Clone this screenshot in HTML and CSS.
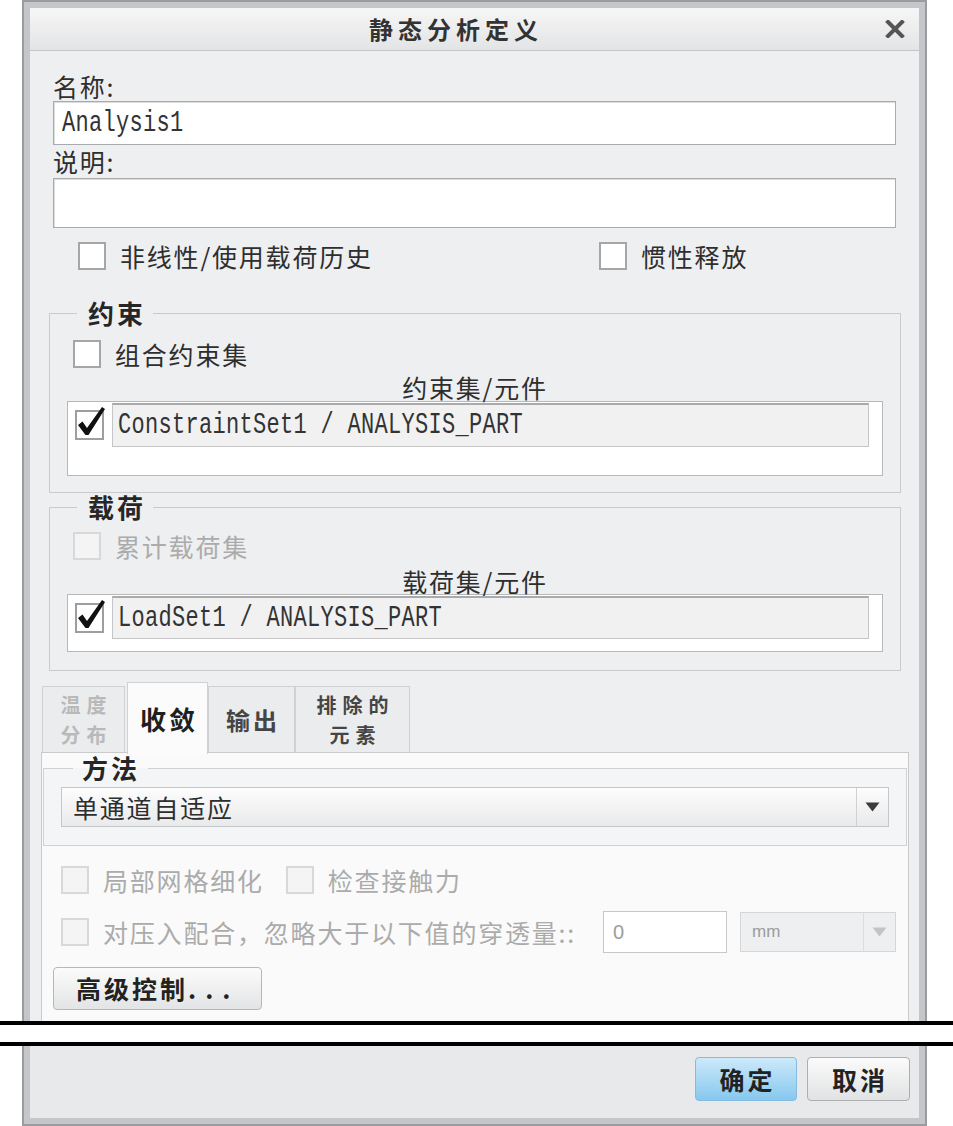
FILE: index.html
```html
<!DOCTYPE html>
<html lang="zh-CN">
<head>
<meta charset="utf-8">
<title>静态分析定义</title>
<link rel="stylesheet" href="styles.css">
</head>
<body>
<div class="dlg dlg-top">
  <div class="frame frame-top">
    <div class="titlebar">
      <div class="title">静态分析定义</div>
      <div class="close">
        <svg width="20" height="18" viewBox="0 0 20 18"><path d="M3 2 L17 16 M17 2 L3 16" stroke="#555" stroke-width="4" stroke-linecap="square" fill="none"/></svg>
      </div>
    </div>
    <div class="content">
      <div class="label">名称:</div>
      <div class="textfield tf-name"><span class="mono">Analysis1</span></div>
      <div class="label lbl-desc">说明:</div>
      <div class="textfield tf-desc"></div>

      <div class="opts">
        <div class="check"><span class="box"></span><span>非线性/使用载荷历史</span></div>
        <div class="check"><span class="box"></span><span>惯性释放</span></div>
      </div>

      <fieldset class="group g-cons">
        <legend>约束</legend>
        <div class="check row-combine"><span class="box"></span><span>组合约束集</span></div>
        <div class="caption">约束集/元件</div>
        <div class="listbox lb-cons">
          <div class="item">
            <span class="box checked"><svg class="tick" width="25" height="26" viewBox="0 0 25 26"><path d="M1 13 L5.5 9.5 L10 16 L25 -5 L28 -3 L11.5 23 L8.5 23 Z" fill="#111"/></svg></span>
            <div class="itemfield"><span class="mono">ConstraintSet1 / ANALYSIS_PART</span></div>
          </div>
        </div>
      </fieldset>

      <fieldset class="group g-load">
        <legend>载荷</legend>
        <div class="check dis row-cum"><span class="box"></span><span>累计载荷集</span></div>
        <div class="caption cap-load">载荷集/元件</div>
        <div class="listbox lb-load">
          <div class="item">
            <span class="box checked"><svg class="tick" width="25" height="26" viewBox="0 0 25 26"><path d="M1 13 L5.5 9.5 L10 16 L25 -5 L28 -3 L11.5 23 L8.5 23 Z" fill="#111"/></svg></span>
            <div class="itemfield"><span class="mono">LoadSet1 / ANALYSIS_PART</span></div>
          </div>
        </div>
      </fieldset>

      <div class="tabs">
        <div class="tab t1 disabled"><div class="tl">温度</div><div class="tl">分布</div></div>
        <div class="tab t2 active">收敛</div>
        <div class="tab t3">输出</div>
        <div class="tab t4"><div class="tl">排除的</div><div class="tl">元素</div></div>
      </div>
      <div class="panel">
        <fieldset class="group g-method">
          <legend>方法</legend>
          <div class="select sel-method">
            <span class="sel-text">单通道自适应</span>
            <span class="sel-arrow"><svg width="15" height="10" viewBox="0 0 15 10"><path d="M0.5 0.5 H14.5 L7.5 9.5 Z" fill="#3c3c3c"/></svg></span>
          </div>
        </fieldset>
        <div class="prow prow1">
          <div class="check dis"><span class="box"></span><span>局部网格细化</span></div>
          <div class="check dis c2"><span class="box"></span><span>检查接触力</span></div>
        </div>
        <div class="prow prow2">
          <div class="check dis c-press"><span class="box"></span><span>对压入配合，忽略大于以下值的穿透量::</span></div>
          <div class="numfield">0</div>
          <div class="select sel-unit">
            <span class="sel-text">mm</span>
            <span class="sel-arrow"><svg width="15" height="10" viewBox="0 0 15 10"><path d="M0.5 0.5 H14.5 L7.5 9.5 Z" fill="#c4c4c4"/></svg></span>
          </div>
        </div>
        <div class="btn adv">高级控制<span class="dots">...</span></div>
      </div>
    </div>
  </div>
</div>
<div class="break"></div>
<div class="dlg dlg-bottom">
  <div class="frame frame-bottom">
    <div class="footer">
      <div class="btn fbtn ok">确定</div>
      <div class="btn fbtn cancel">取消</div>
    </div>
  </div>
</div>
</body>
</html>
```

FILE: styles.css
```css
* { box-sizing: border-box; }
html, body { margin: 0; padding: 0; background: #fff; }
body {
  width: 953px;
  height: 1126px;
  overflow: hidden;
  font-family: "Noto Sans CJK SC", "Noto Sans", sans-serif;
  font-size: 25px;
  letter-spacing: 1.8px;
  color: #2e2e2e;
}

/* dialog frame */
.dlg { margin-left: 22px; width: 905px; border: 2px solid #9a9c9f; }
.dlg-top { border-bottom: 0; height: 1021px; overflow: hidden; }
.dlg-bottom { border-top: 0; height: 80px; }
.frame { border: 6px solid #c4c6c9; height: 100%; }
.frame-top { border-bottom: 0; display: flex; flex-direction: column; }
.frame-bottom { border-top: 0; }

.break {
  height: 25px;
  border-top: 4px solid #000;
  border-bottom: 4px solid #000;
  background: #fff;
}

/* title bar */
.titlebar {
  height: 43px;
  flex: none;
  display: flex;
  align-items: center;
  background: linear-gradient(#f6f6f7, #e3e4e5);
  border-bottom: 1px solid #c4c5c7;
}
.title {
  flex: 1;
  text-align: center;
  font-weight: 700;
  font-size: 24px;
  letter-spacing: 5px;
  padding-left: 5px;
  line-height: 30px;
  color: #333;
}
.close { width: 42px; display: flex; align-items: center; padding-left: 8px; }

/* content */
.content {
  flex: 1;
  background: #eeeff1;
  padding: 20px 23px 0;
  overflow: hidden;
}
.label { height: 30px; line-height: 30px; }
.lbl-desc { height: 33px; line-height: 33px; }
.textfield {
  background: #fff;
  border: 1px solid #a9abad;
  box-shadow: inset 1px 1px 0 #dcdcdc;
}
.tf-name { height: 44px; padding-left: 8px; display: flex; align-items: center; }
.tf-desc { height: 50px; }

.mono {
  display: inline-block;
  font-family: "Liberation Mono", monospace;
  font-size: 22px;
  letter-spacing: 0.3px;
  color: #333;
  transform: scaleY(1.3);
}

/* checkboxes */
.check { display: flex; align-items: center; white-space: nowrap; }
.box {
  flex: none;
  width: 28px;
  height: 28px;
  border: 2px solid #a4a6a8;
  background: #fff;
  margin-right: 14px;
}
.check.dis { color: #ababab; }
.check.dis .box { border-color: #d7d8da; background: #f4f4f5; }

.opts { margin-top: 14px; height: 28px; display: flex; align-items: center; padding-left: 25px; }
.opts .check:first-child { width: 521px; }

/* group boxes */
.group {
  margin: 29px -5px 0 -4px;
  border: 1px solid #c8cacc;
  padding: 0 17px 16px;
  min-width: 0;
}
.group legend {
  font-weight: 700;
  font-size: 26px;
  letter-spacing: 3px;
  line-height: 28px;
  padding: 0 7px 0 11px;
  margin-left: 10px;
  color: #262626;
}
.g-load { margin-top: 0; padding-bottom: 18px; }

.row-combine, .row-cum { margin-left: 6px; height: 28px; }
.row-combine { margin-top: 13px; }
.row-cum { margin-top: 11px; }

.caption { text-align: center; line-height: 28px; height: 28px; margin-top: 5px; }
.cap-load { margin-top: 8px; line-height: 26px; height: 26px; }

.listbox { background: #fff; border: 1px solid #b6b8ba; }
.lb-cons { height: 75px; }
.lb-load { height: 58px; }
.item { display: flex; align-items: center; padding: 1px 13px 0 7px; }
.item .box {
  width: 29px;
  height: 30px;
  margin-right: 8px;
  border-color: #9c9ea0;
}
.tick { display: block; overflow: visible; }
.itemfield {
  flex: 1;
  height: 44px;
  background: #f1f1f2;
  border: 1px solid #c3c5c7;
  border-top: 2px solid #a8aaac;
  display: flex;
  align-items: center;
  padding-left: 5px;
}
.lb-load .itemfield { height: 43px; }

/* tabs */
.tabs {
  display: flex;
  align-items: flex-end;
  height: 70px;
  margin: 11px 0 0 -11px;
}
.tab {
  height: 66px;
  border: 1px solid #cfd1d3;
  border-bottom: 0;
  background: #ebecee;
  display: flex;
  flex-direction: column;
  align-items: center;
  justify-content: center;
  text-align: center;
  font-weight: 700;
  font-size: 24px;
  letter-spacing: 3px;
  line-height: 30px;
  padding-left: 3px;
  color: #454545;
}
.tab .tl { height: 29.5px; line-height: 29.5px; font-size: 20px; letter-spacing: 6px; padding-left: 3px; }
.t1 { width: 83px; margin-right: 2px; }
.t2 { width: 81px; }
.t3 { width: 87px; }
.t4 { width: 115px; }
.tab.disabled { color: #b9b9b9; }
.tab.active {
  height: 72px;
  margin-bottom: -2px;
  background: #fbfbfb;
  position: relative;
  z-index: 1;
  font-size: 26px;
  letter-spacing: 3px;
  color: #1f1f1f;
}

/* tab panel */
.panel {
  margin: 0 -13px 0 -12px;
  border: 1px solid #c8cacc;
  background: #fafafa;
  height: 320px;
}
.g-method {
  margin: 1px 1px 0;
  padding: 0 17px 18px;
  background: #f4f5f6;
  border-color: #cfd1d3;
}
.g-method legend { margin-left: 12px; padding: 0 8px 0 9px; }

.select {
  display: flex;
  height: 40px;
  border: 1px solid #c5c7c9;
  background: linear-gradient(#fdfdfd, #e9eaeb);
}
.sel-method { margin-top: 5px; }
.sel-text { flex: 1; padding-left: 11px; line-height: 38px; }
.sel-arrow {
  width: 32px;
  border-left: 1px solid #cfd1d3;
  display: flex;
  align-items: center;
  justify-content: center;
}

.prow { display: flex; align-items: center; padding-left: 19px; }
.prow1 { margin-top: 20px; height: 28px; }
.prow1 .c2 { margin-left: 22px; }
.prow2 { margin-top: 17px; height: 42px; }
.c-press { width: 529px; }
.numfield {
  width: 124px;
  height: 42px;
  margin-left: 13px;
  background: #fff;
  border: 1px solid #c6c8ca;
  font-family: "Liberation Sans", sans-serif;
  font-size: 20px;
  letter-spacing: 0;
  color: #9c9c9c;
  padding-left: 9px;
  display: flex;
  align-items: center;
}
.sel-unit {
  width: 156px;
  margin-left: 13px;
  background: #eeeff0;
  border-color: #d4d6d8;
  font-family: "Liberation Sans", sans-serif;
  font-size: 17px;
  letter-spacing: 0;
  color: #9c9c9c;
}
.sel-unit .sel-arrow { border-left-color: #dcdddf; }

.btn {
  border-radius: 4px;
  font-weight: 700;
  font-size: 25px;
  letter-spacing: 3px;
  color: #222;
}
.adv {
  margin: 14px 0 0 11px;
  width: 209px;
  height: 43px;
  line-height: 41px;
  border: 1px solid #b5b7b9;
  background: linear-gradient(#fbfbfb, #e3e4e5);
  padding-left: 22px;
}
.dots { letter-spacing: 9px; }

/* footer */
.footer {
  height: 100%;
  background: #e8e9eb;
  display: flex;
  justify-content: flex-end;
  align-items: flex-start;
  gap: 10px;
  padding: 11px 9px 0 0;
}
.fbtn {
  height: 44px;
  line-height: 42px;
  text-align: center;
  padding-left: 3px;
}
.ok {
  width: 102px;
  background: linear-gradient(#cde9fa, #86c8ee);
  border: 1px solid #85bbe0;
}
.cancel {
  width: 103px;
  background: linear-gradient(#fbfbfb, #e1e2e3);
  border: 1px solid #acaeb0;
}
```
